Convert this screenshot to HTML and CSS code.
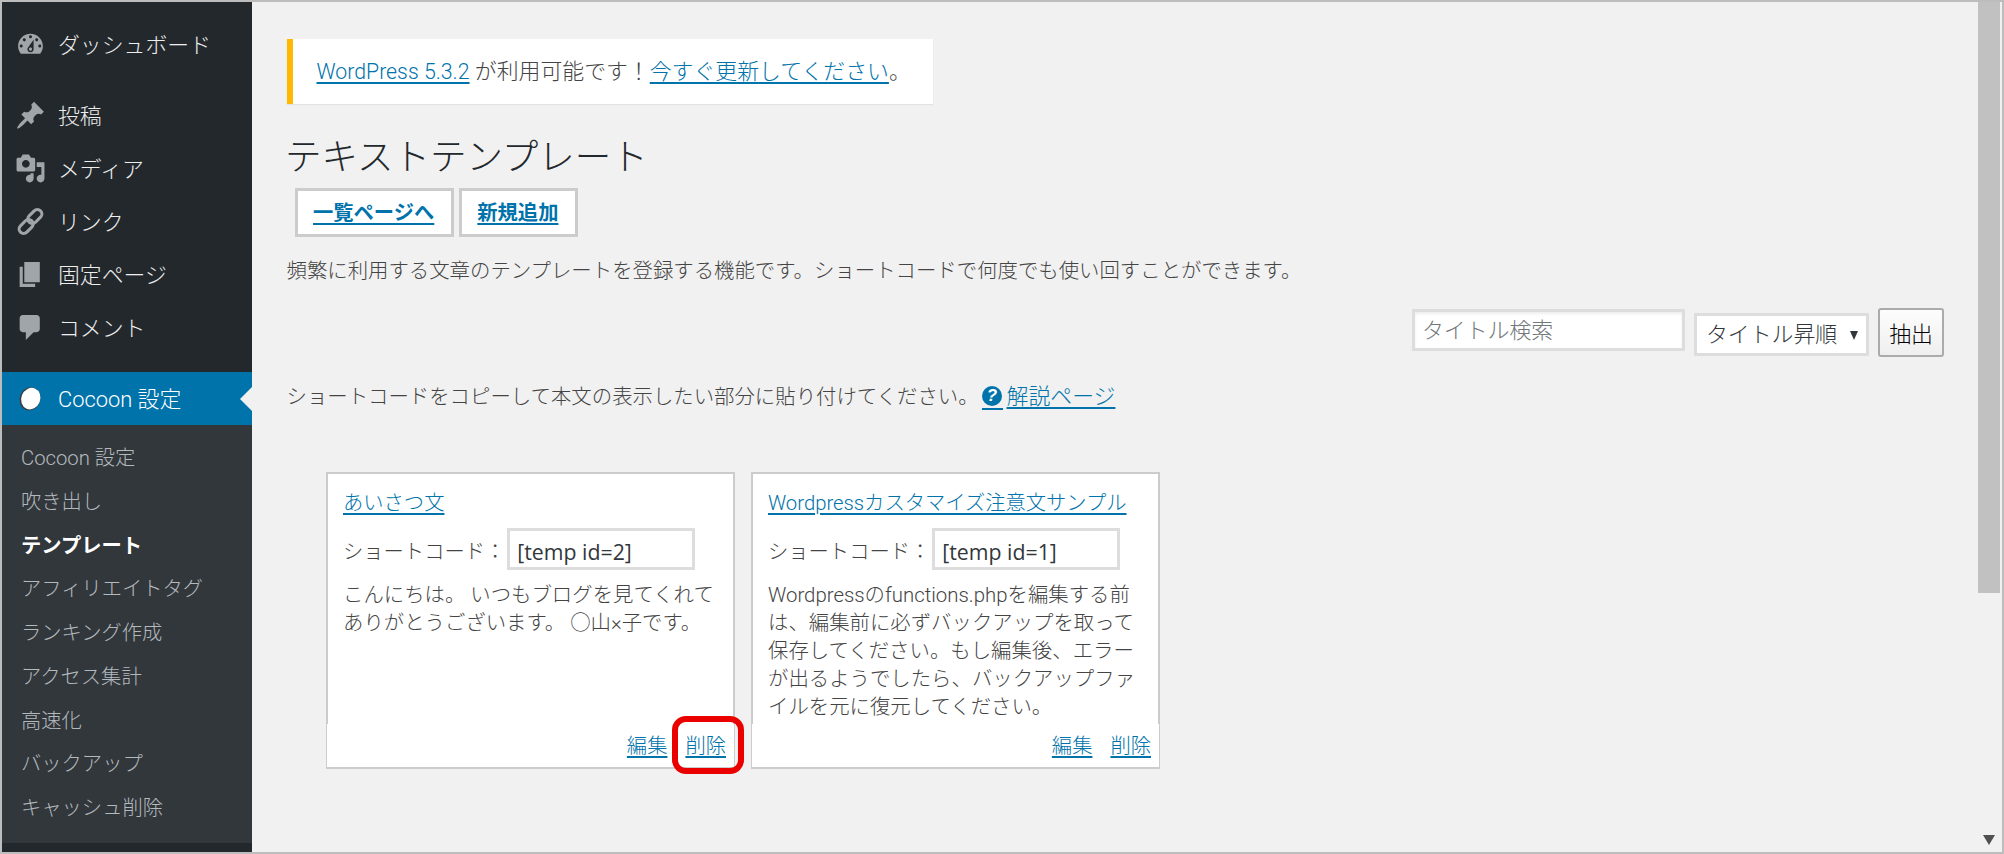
FILE: index.html
```html
<!DOCTYPE html>
<html lang="ja">
<head>
<meta charset="utf-8">
<title>テキストテンプレート</title>
<link rel="stylesheet" href="styles.css">
</head>
<body>
<div class="frame">
  <nav class="sidebar">
    <ul class="menu">
      <li class="item">
        <svg class="icon" viewBox="0 0 20 20"><path fill-rule="evenodd" d="M3.76 16h12.48c1.1-1.37 1.76-3.11 1.76-5 0-4.42-3.58-8-8-8s-8 3.58-8 8c0 1.89.66 3.63 1.76 5zM10 4c.55 0 1 .45 1 1s-.45 1-1 1-1-.45-1-1 .45-1 1-1zM6 6c.55 0 1 .45 1 1s-.45 1-1 1-1-.45-1-1 .45-1 1-1zm8 0c.55 0 1 .45 1 1s-.45 1-1 1-1-.45-1-1 .45-1 1-1zm-5.37 5.55L12 7v6c0 1.1-.9 2-2 2s-2-.9-2-2c0-.57.24-1.08.63-1.45zM4 10c.55 0 1 .45 1 1s-.45 1-1 1-1-.45-1-1 .45-1 1-1zm12 0c.55 0 1 .45 1 1s-.45 1-1 1-1-.45-1-1 .45-1 1-1zm-5 3c0-.55-.45-1-1-1s-1 .45-1 1 .45 1 1 1 1-.45 1-1z"/></svg>
        <span>ダッシュボード</span>
      </li>
    </ul>
    <ul class="menu">
      <li class="item">
        <svg class="icon" viewBox="0 0 20 20"><path d="M10.44 3.02l1.82-1.82 6.36 6.35-1.83 1.82c-1.05-.68-2.48-.57-3.41.36l-.75.75c-.92.93-1.04 2.35-.35 3.41l-1.83 1.82-2.41-2.41-2.8 2.79c-.42.42-3.38 2.71-3.8 2.29s1.86-3.39 2.28-3.81l2.79-2.79L4.1 9.36l1.83-1.82c1.05.69 2.48.57 3.4-.36l.75-.75c.93-.92 1.05-2.35.36-3.41z"/></svg>
        <span>投稿</span>
      </li>
      <li class="item">
        <svg class="icon" viewBox="0 0 20 20"><path fill-rule="evenodd" d="M13 11V4c0-.55-.45-1-1-1h-1.67L9 1H5L3.67 3H2c-.55 0-1 .45-1 1v7c0 .55.45 1 1 1h10c.55 0 1-.45 1-1zM7 4.5c1.38 0 2.5 1.12 2.5 2.5S8.38 9.5 7 9.5 4.5 8.38 4.5 7 5.62 4.5 7 4.5zM14 6h5v10.5c0 1.38-1.12 2.5-2.5 2.5S14 17.88 14 16.5s1.12-2.5 2.5-2.5c.17 0 .34.02.5.05V9h-3V6zm-4 8.05V13h2v3.5c0 1.38-1.12 2.5-2.5 2.5S7 17.88 7 16.5 8.12 14 9.5 14c.17 0 .34.02.5.05z"/></svg>
        <span>メディア</span>
      </li>
      <li class="item">
        <svg class="icon" viewBox="0 0 20 20"><rect class="chain" x="7.6" y="3.9" width="10.4" height="5.8" rx="2.9" transform="rotate(-45 12.8 6.8)"/><rect class="chain" x="2" y="10.3" width="10.4" height="5.8" rx="2.9" transform="rotate(-45 7.2 13.2)"/></svg>
        <span>リンク</span>
      </li>
      <li class="item">
        <svg class="icon" viewBox="0 0 20 20"><path d="M6 15V2h10v13H6zm-1 1h8v2H3V5h2v11z"/></svg>
        <span>固定ページ</span>
      </li>
      <li class="item">
        <svg class="icon" viewBox="0 0 20 20"><path d="M5 2h9c1.1 0 2 .9 2 2v7c0 1.1-.9 2-2 2h-2l-5 5v-5H5c-1.1 0-2-.9-2-2V4c0-1.1.9-2 2-2z"/></svg>
        <span>コメント</span>
      </li>
    </ul>
    <div class="active-item">
      <svg class="icon" viewBox="0 0 20 20"><ellipse class="cocoon-edge" cx="9.8" cy="10.3" rx="6.7" ry="7.6" transform="rotate(22 10 10)"/><ellipse class="cocoon" cx="10.2" cy="10" rx="6.1" ry="7.1" transform="rotate(22 10 10)"/></svg>
      <span>Cocoon 設定</span>
    </div>
    <ul class="submenu">
      <li>Cocoon 設定</li>
      <li>吹き出し</li>
      <li class="current">テンプレート</li>
      <li>アフィリエイトタグ</li>
      <li>ランキング作成</li>
      <li>アクセス集計</li>
      <li>高速化</li>
      <li>バックアップ</li>
      <li>キャッシュ削除</li>
    </ul>
  </nav>

  <main class="main">
    <div class="notice"><a class="version" href="#">WordPress 5.3.2</a> が利用可能です！<a href="#">今すぐ更新してください</a>。</div>
    <h1 class="title">テキストテンプレート</h1>
    <div class="actions">
      <a class="action" href="#">一覧ページへ</a>
      <a class="action" href="#">新規追加</a>
    </div>
    <p class="desc">頻繁に利用する文章のテンプレートを登録する機能です。ショートコードで何度でも使い回すことができます。</p>
    <form class="toolbar">
      <input class="search" type="text" placeholder="タイトル検索">
      <div class="select-wrap">
        <select class="select"><option>タイトル昇順</option></select>
      </div>
      <button class="submit" type="button">抽出</button>
    </form>
    <p class="hint">ショートコードをコピーして本文の表示したい部分に貼り付けてください。<a class="help-icon" href="#"><span class="help-glyph">?</span></a><a class="help-link" href="#">解説ページ</a></p>

    <div class="cards">
      <article class="card">
        <a class="card-title" href="#">あいさつ文</a>
        <div class="code-row"><span class="code-label">ショートコード：</span><input class="code" type="text" value="[temp id=2]"></div>
        <p class="card-text">こんにちは。 いつもブログを見てくれて<br>ありがとうございます。 ○山×子です。</p>
        <div class="card-foot"><a href="#">編集</a><a href="#">削除</a></div>
        <div class="callout"></div>
      </article>
      <article class="card">
        <a class="card-title" href="#">Wordpressカスタマイズ注意文サンプル</a>
        <div class="code-row"><span class="code-label">ショートコード：</span><input class="code" type="text" value="[temp id=1]"></div>
        <p class="card-text">Wordpressのfunctions.phpを編集する前<br>は、編集前に必ずバックアップを取って<br>保存してください。もし編集後、エラー<br>が出るようでしたら、バックアップファ<br>イルを元に復元してください。</p>
        <div class="card-foot"><a href="#">編集</a><a href="#">削除</a></div>
      </article>
    </div>
  </main>

  <div class="scrollbar">
    <div class="thumb"></div>
    <div class="arrow"></div>
  </div>
</div>
</body>
</html>
```

FILE: styles.css
```css
* {
  box-sizing: border-box;
}

html,
body {
  margin: 0;
  height: 100%;
  overflow: hidden;
}

body {
  font-family: "Roboto", "Noto Sans CJK JP", sans-serif;
  font-size: 20.4px;
  font-weight: 300;
  line-height: 28px;
  color: #444;
  background: #f1f1f1;
}

a {
  color: #0073aa;
  text-decoration: underline;
  text-decoration-thickness: 1.5px;
  text-underline-offset: 3px;
}

.frame {
  display: flex;
  width: 2004px;
  height: 854px;
  border: 2px solid #bdbdbd;
}

/* Sidebar */
.sidebar {
  flex: none;
  width: 250px;
  height: 850px;
  padding-top: 16px;
  background: #23282d;
  color: #eee;
  font-size: 21.875px;
}

.menu,
.submenu {
  margin: 0;
  padding: 0;
  list-style: none;
}

.menu {
  margin-bottom: 18px;
}

.item,
.active-item {
  display: flex;
  align-items: center;
  gap: 12px;
  height: 53px;
  padding-left: 13px;
}

.item span,
.active-item span {
  padding-top: 2px;
}

.icon {
  flex: none;
  width: 31px;
  height: 31px;
  fill: #a0a5aa;
}

.chain {
  fill: none;
  stroke: #a0a5aa;
  stroke-width: 2;
}

.active-item {
  position: relative;
  background: #0073aa;
  color: #fff;
}

.active-item::after {
  content: "";
  position: absolute;
  right: 0;
  top: 15px;
  border: 12px solid transparent;
  border-left-width: 0;
  border-right-color: #f1f1f1;
}

.cocoon {
  fill: #fff;
}

.cocoon-edge {
  fill: #3a3f44;
}

.submenu {
  height: 418px;
  padding-top: 12px;
  background: #32373c;
  color: #b4b9be;
  font-size: 20.3px;
}

.submenu li {
  height: 43.75px;
  padding-left: 19px;
  line-height: 43.75px;
}

.submenu .current {
  color: #fff;
  font-weight: 700;
}

/* Main column */
.main {
  flex: 1;
  min-width: 0;
  padding: 37px 34px 0 34.5px;
}

.notice {
  width: 646.5px;
  height: 65px;
  padding-left: 24px;
  font-size: 21.875px;
  line-height: 65px;
  background: #fff;
  border-left: 6px solid #ffb900;
  box-shadow: 0 1px 1px rgba(0, 0, 0, 0.06);
}

.version {
  font-size: 21.3px;
}

.title {
  margin: 29px 0 0 -1.5px;
  font-size: 36.5px;
  font-weight: 300;
  line-height: 50px;
  color: #23282d;
}

.actions {
  display: flex;
  gap: 5px;
  margin: 5px 0 0 8.5px;
}

.action {
  display: flex;
  align-items: center;
  height: 49px;
  padding: 0 17px 0 15px;
  background: #fff;
  border: 3px solid #ccc;
  font-size: 20.3px;
  font-weight: 700;
}

.desc {
  margin: 20px 0 0;
}

.toolbar {
  display: flex;
  justify-content: flex-end;
  align-items: flex-start;
  gap: 9px;
  margin-top: 23px;
  font-size: 21.875px;
}

.search,
.select,
.submit {
  font-family: inherit;
  font-size: 21.875px;
  font-weight: 300;
  margin: 0;
  outline: 0;
}

.search {
  width: 273px;
  height: 42px;
  margin-top: 1px;
  padding: 0 7px;
  background: #fff;
  border: 3px solid #ddd;
  box-shadow: inset 0 2px 3px rgba(0, 0, 0, 0.07);
  color: #32373c;
}

.search::placeholder {
  color: #72777c;
  opacity: 1;
}

.select-wrap {
  position: relative;
  margin-top: 5px;
}

.select-wrap::after {
  content: "";
  position: absolute;
  right: 11px;
  top: 18px;
  border-style: solid;
  border-width: 9px 4.5px 0;
  border-color: #32373c transparent transparent;
}

.select {
  appearance: none;
  display: block;
  width: 175px;
  height: 43px;
  padding: 0 0 0 9px;
  background: #fff;
  border: 3px solid #ddd;
  border-radius: 0;
  color: #32373c;
}

.submit {
  width: 66px;
  height: 49px;
  padding: 0;
  background: linear-gradient(#fdfdfd, #efefef);
  border: 2px solid #ababab;
  border-radius: 3px;
  color: #000;
}

.hint {
  height: 28px;
  margin: 26px 0 0;
  white-space: nowrap;
}

.help-icon {
  position: relative;
  display: inline-block;
  width: 21px;
  height: 28px;
  margin-left: 3px;
  vertical-align: top;
  text-decoration: none;
}

.help-icon::after {
  content: "";
  position: absolute;
  left: 0;
  right: 0;
  top: 25px;
  height: 2px;
  background: #0073aa;
}

.help-glyph {
  position: absolute;
  left: 0.5px;
  top: 3px;
  width: 20px;
  height: 20px;
  border-radius: 50%;
  background: #0073aa;
  color: #fff;
  font-family: "Liberation Sans", sans-serif;
  font-size: 17px;
  font-weight: 700;
  font-style: italic;
  line-height: 20px;
  text-align: center;
}

.help-link {
  margin-left: 4px;
  font-size: 21.875px;
}

/* Cards */
.cards {
  display: flex;
  gap: 16px;
  margin: 61px 0 0 39.5px;
}

.card {
  position: relative;
  display: flex;
  flex-direction: column;
  width: 409px;
  height: 297px;
  padding-top: 15px;
  background: #fff;
  border: 2px solid #ccc;
}

.card-title {
  align-self: flex-start;
  margin-left: 15px;
  font-size: 20.3px;
}

.code-row {
  display: flex;
  align-items: center;
  gap: 2px;
  margin: 11px 0 0 15px;
  font-size: 20.3px;
}

.code-label {
  padding-top: 6px;
}

.code {
  width: 188px;
  height: 42px;
  margin: 0;
  padding: 4px 7px 0;
  background: #fff;
  border: 3px solid #ddd;
  outline: 0;
  color: #32373c;
  font-family: "Open Sans", "Noto Sans CJK JP", sans-serif;
  font-size: 21.3px;
  font-weight: 400;
}

.card-text {
  margin: 11px 0 0 15px;
}

.card-foot {
  display: flex;
  justify-content: flex-end;
  align-items: center;
  gap: 18px;
  flex: none;
  height: 43px;
  margin: auto -1px 0;
  padding-right: 8px;
  background: #fff;
  font-size: 20.3px;
}

.callout {
  position: absolute;
  left: 344px;
  top: 242px;
  width: 72px;
  height: 58px;
  border: 6px solid #eb0000;
  border-radius: 14px;
}

/* Window scrollbar */
.scrollbar {
  position: relative;
  flex: none;
  width: 24px;
  background: #f1f1f1;
}

.thumb {
  width: 22px;
  height: 591px;
  background: #c1c1c1;
}

.arrow {
  position: absolute;
  left: 5px;
  bottom: 7px;
  border-style: solid;
  border-width: 10px 6.5px 0;
  border-color: #505050 transparent transparent;
}
```
